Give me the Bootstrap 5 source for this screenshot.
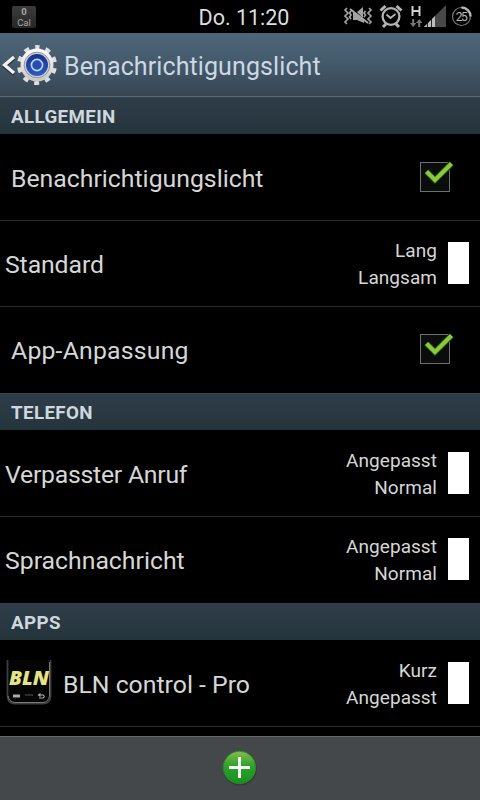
<!DOCTYPE html>
<html lang="de" data-bs-theme="dark">
<head>
<meta charset="utf-8">
<meta name="viewport" content="width=device-width, initial-scale=1">
<title>Benachrichtigungslicht</title>
<link href="https://cdn.jsdelivr.net/npm/bootstrap@5.3.0/dist/css/bootstrap.min.css" rel="stylesheet">
<style>
body{font-family:Roboto,"Liberation Sans",sans-serif;background:#000;color:#d6d6d6}
.screen{width:480px;height:800px}
.status-bar{height:33px;background:#000}
.clock{font-size:21.500px;line-height:36px;color:#dedede;margin-left:148px;width:120px}
.cal{width:24px;height:22px;margin:6px 0 0 12px;background:linear-gradient(#3c3c3c,#272727);color:#a6a6a6;font-size:9.500px;line-height:11px;border-radius:2px}
.title-bar{height:64px;background:linear-gradient(#4f667a,#445b6c 45%,#364552);border-bottom:1px solid #596b77}
.title-bar h1{font-size:25px;line-height:30px;letter-spacing:.1px;color:#ccd8e4;margin-left:7px;padding-top:5px;font-weight:400}
.section-head{height:37px;background:linear-gradient(#2f3d49,#24343b);border-top:1px solid #34434d;font-size:18.800px;line-height:38px;letter-spacing:.35px;color:#ced7de;padding-left:11px;font-weight:700}
.list-group-item.setting{height:86px;border:0;background:#000;color:#d6d6d6;padding:0 11px 2px 5px;border-radius:0}
.list-group-item.setting.ruled{border-bottom:1px solid #2b2b2b}
.list-group-item.setting.tall{height:87px;padding-bottom:0}
.setting .name{font-size:24.800px;line-height:30px;padding-top:3px}
.setting .name.tight{letter-spacing:-.25px}
.setting .name.loose{letter-spacing:.2px}
.setting .name.low{padding-top:5px;letter-spacing:-.1px}
.list-group-item.setting.inset{padding-left:11px;padding-right:25px}
.setting .values{font-size:19px;line-height:27px;letter-spacing:.05px;padding-top:2px}
.swatch{width:21px;height:42px;background:#fff;margin-left:11px}
.app-name{margin-left:10px}
.check-icon{margin-top:-2px}
.tool-bar{height:64px;background:#44484b;border-top:1px solid #666b6e;margin-top:9px;padding-bottom:2px}
svg{display:block;flex:none}
</style>
</head>
<body>
<main class="screen d-flex flex-column overflow-hidden">
  <header>
    <div class="status-bar d-flex align-items-start">
      <div class="cal text-center"><b class="d-block">0</b><span class="d-block">Cal</span></div>
      <div class="clock text-center">Do. 11:20</div>
      <svg class="ms-auto" width="145" height="33" viewBox="335 0 145 33">
        <g fill="none" stroke="#a2a2a2" stroke-width="1.700">
          <path d="M347 8l-2 2 3 3-3 3 3 3-3 3 2 2M351 11l-1.500 2 1.500 2-1.500 2 1.500 2M369 8l2 2-3 3 3 3-3 3 3 3-2 2M365.500 11l-1.500 2 1.500 2-1.500 2"/>
        </g>
        <path d="M353 13h3l8 7v3l-7-3h-4zM357 12l6-5v11z" fill="#a2a2a2"/>
        <path d="M350 9l18 14" stroke="#a8a8a8" stroke-width="2"/>
        <g fill="none" stroke="#b4b4b4">
          <circle cx="391" cy="16.500" r="8.400" stroke-width="2.300"/>
          <path d="M386.500 14.500l4 3.500 5-4" stroke-width="1.800"/>
          <path d="M380.500 10.500l5-4.500M401.500 10.500l-5-4.500M386 24l-3 3M396 24l3 3" stroke-width="3"/>
        </g>
        <path d="M412.500 6v10M419.500 6v10M412.500 11h7" stroke="#d0d0d0" stroke-width="2" fill="none"/>
        <path d="M410 23h2.200v-4h2v4h2.200l-3.200 4zM416 23l3.200-4 3.200 4h-2.200v4h-2v-4z" fill="#777"/>
        <path d="M446 5v22h-22z" fill="#484848"/>
        <path d="M424 27l11-11v11z" fill="#bcbcbc"/>
        <path d="M427.500 18v9M431.500 15v12" stroke="#000" stroke-width=".8"/>
        <circle cx="461.500" cy="16.500" r="9" fill="none" stroke="#777" stroke-width="1.200"/>
        <path d="M461.500 7.500a9 9 0 0 1 9 9" fill="none" stroke="#b5b5b5" stroke-width="2.400"/>
        <text x="461.800" y="21" font-size="12" text-anchor="middle" textLength="12" fill="#b8b8b8">25</text>
      </svg>
    </div>
    <div class="title-bar d-flex align-items-center">
      <svg width="57" height="48" viewBox="0 41 57 48">
        <defs>
          <linearGradient id="metal" x2="0" y2="1"><stop stop-color="#fff"/><stop offset="1" stop-color="#c5c5c5"/></linearGradient>
          <linearGradient id="blue" x2="0" y2="1"><stop stop-color="#15328a"/><stop offset="1" stop-color="#2d5cc4"/></linearGradient>
        </defs>
        <path d="M14 57.500L4.500 65.500l9.500 8" fill="none" stroke="#26343f" stroke-width="3.500" transform="translate(0 1)"/>
        <path d="M14 57L4.500 65l9.500 8" fill="none" stroke="#f2f2f2" stroke-width="3.200"/>
        <circle cx="37" cy="65" r="17.700" fill="none" stroke="#dedede" stroke-width="4.600" stroke-dasharray="5 6.121" stroke-dashoffset="2.500" transform="rotate(-90 37 65)"/>
        <circle cx="37" cy="65" r="16.500" fill="url(#metal)"/>
        <circle cx="37" cy="65" r="12.800" fill="#cfcfd2" stroke="#96969b" stroke-width="1"/>
        <circle cx="37" cy="65" r="11" fill="url(#blue)"/>
        <circle cx="37" cy="65" r="5.600" fill="#254eb0" stroke="#b9d0ee" stroke-width="1.700"/>
      </svg>
      <h1 class="mb-0">Benachrichtigungslicht</h1>
    </div>
  </header>

  <section>
    <h2 class="section-head mb-0">ALLGEMEIN</h2>
    <div class="list-group list-group-flush">
      <div class="list-group-item setting ruled tall inset d-flex align-items-center justify-content-between">
        <span class="name">Benachrichtigungslicht</span>
        <svg class="check-icon" width="36" height="36" viewBox="0 0 36 36" role="img" aria-label="Aktiviert">
          <rect x="1.500" y="4.500" width="29" height="29" fill="#0b0d0d" stroke="#6a7175"/>
          <path d="M7.500 13.500l8.500 8.500L32.500 5.500" fill="none" stroke="#173908" stroke-width="6.500"/>
          <path d="M7.500 13.500l8.500 8.500L32.500 5.500" fill="none" stroke="#8bc93c" stroke-width="4.300"/>
        </svg>
      </div>
      <div class="list-group-item setting ruled d-flex align-items-center">
        <span class="name low me-auto">Standard</span>
        <div class="values text-end">Lang<br>Langsam</div>
        <div class="swatch"></div>
      </div>
      <div class="list-group-item setting inset d-flex align-items-center justify-content-between">
        <span class="name loose">App-Anpassung</span>
        <svg class="check-icon" width="36" height="36" viewBox="0 0 36 36" role="img" aria-label="Aktiviert">
          <rect x="1.500" y="4.500" width="29" height="29" fill="#0b0d0d" stroke="#6a7175"/>
          <path d="M7.500 13.500l8.500 8.500L32.500 5.500" fill="none" stroke="#173908" stroke-width="6.500"/>
          <path d="M7.500 13.500l8.500 8.500L32.500 5.500" fill="none" stroke="#8bc93c" stroke-width="4.300"/>
        </svg>
      </div>
    </div>
  </section>

  <section>
    <h2 class="section-head mb-0">TELEFON</h2>
    <div class="list-group list-group-flush">
      <div class="list-group-item setting ruled tall d-flex align-items-center">
        <span class="name tight me-auto">Verpasster Anruf</span>
        <div class="values text-end">Angepasst<br>Normal</div>
        <div class="swatch"></div>
      </div>
      <div class="list-group-item setting d-flex align-items-center">
        <span class="name me-auto">Sprachnachricht</span>
        <div class="values text-end">Angepasst<br>Normal</div>
        <div class="swatch"></div>
      </div>
    </div>
  </section>

  <section>
    <h2 class="section-head mb-0">APPS</h2>
    <div class="list-group list-group-flush">
      <div class="list-group-item setting ruled tall d-flex align-items-center">
        <svg width="48" height="50" viewBox="0 -2 48 50">
          <path d="M2.500 0v36q0 7 7 7.500h29q7-.5 7-7.500V0" fill="#050505" stroke="#3c3e40" stroke-width="1.800"/>
          <path d="M3 36q1 6 7 6.500h28q5.500-.5 6.500-6.500V2" fill="none" stroke="#909090" stroke-width=".8"/>
          <text x="24" y="24.500" font-size="20" font-family="Open Sans, sans-serif" font-weight="800" font-style="italic" text-anchor="middle" textLength="40" lengthAdjust="spacingAndGlyphs" fill="#e6e386">BLN</text>
          <path d="M8 34.500h7v3H8z" fill="#aaa"/><path d="M20 35h8" stroke="#555"/>
          <path d="M34 38h4q2.500-1.500 0-3h-4M35.500 33.500l-2 1.500 2 1.500" fill="none" stroke="#aaa" stroke-width="1.100"/>
        </svg>
        <span class="name app-name me-auto">BLN control - Pro</span>
        <div class="values text-end">Kurz<br>Angepasst</div>
        <div class="swatch"></div>
      </div>
    </div>
  </section>

  <footer class="tool-bar d-flex justify-content-center align-items-center">
    <svg width="36" height="36" viewBox="0 0 36 36" role="img" aria-label="Hinzufügen">
      <defs><linearGradient id="green" x2="0" y2="1"><stop stop-color="#86bd4c"/><stop offset=".45" stop-color="#2fa02c"/><stop offset="1" stop-color="#16901f"/></linearGradient></defs>
      <circle cx="18" cy="18.500" r="17" fill="#333b35"/>
      <circle cx="17.500" cy="17.500" r="16.300" fill="url(#green)" stroke="#2b8a28" stroke-width=".8"/>
      <path d="M17.500 7v21M7 17.500h21" stroke="#f4fbf2" stroke-width="3"/>
    </svg>
  </footer>
</main>
<script src="https://cdn.jsdelivr.net/npm/bootstrap@5.3.0/dist/js/bootstrap.bundle.min.js"></script>
</body>
</html>
